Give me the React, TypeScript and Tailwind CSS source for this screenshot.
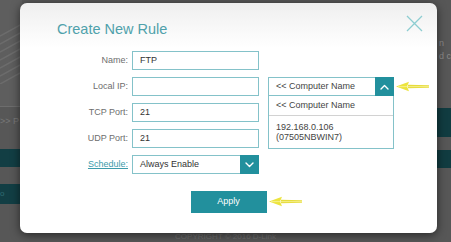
import React from 'react';

const teal = 'bg-[#22909d]';

function Chevron({ up }: { up?: boolean }) {
  return (
    <svg width="9" height="6" viewBox="0 0 9 6" fill="none">
      <path
        d={up ? 'M1 5 L4.5 1.5 L8 5' : 'M1 1 L4.5 4.5 L8 1'}
        stroke="white"
        strokeWidth="1.4"
        strokeLinecap="round"
        strokeLinejoin="round"
      />
    </svg>
  );
}

function YellowArrow() {
  return (
    <svg width="35" height="11" viewBox="0 0 35 11">
      <path d="M13 3.8 L34 4.3 L34 6.7 L13 7.2 Z" fill="#e6dc3c" />
      <path d="M1 5.5 L14 0.8 L12 5.5 L14 10.2 Z" fill="#ece43e" />
      <path d="M3 5.6 L34 5.6" stroke="#f7f39a" strokeWidth="0.8" />
    </svg>
  );
}

function Field({ label, value, link }: { label: string; value?: string; link?: boolean }) {
  return (
    <div className="flex items-center h-[19px]">
      <div
        className={`w-[108px] text-right text-[9px] ${link ? 'text-[#3d9cab] underline' : 'text-[#6e6e6e]'}`}
      >
        {label}
      </div>
      <div className="ml-[4px] w-[127px] h-[19px] border border-[#84c2c9] bg-white flex items-center pl-[7px] text-[9px] text-[#333]">
        {value}
      </div>
    </div>
  );
}

export default function App() {
  return (
    <div className="relative w-[451px] h-[242px] overflow-hidden bg-[#575757] font-['Liberation_Sans',Arial,sans-serif]">
      {/* page behind the overlay */}
      <div className="flex flex-col h-full">
        <div className="flex justify-between h-[234px]">
          <div className="w-[22px] flex flex-col">
            <div className="h-[106px] bg-[#5e5e5e] pt-[24px]">
              <svg width="22" height="60" viewBox="0 0 22 60">
                {[0, 8, 16, 24, 32, 40, 48].map((y) => (
                  <path key={y} d={`M0 ${y + 12} L22 ${y}`} stroke="#6c6c6c" strokeWidth="1.5" />
                ))}
              </svg>
            </div>
            <div className="h-[1px] bg-[#6d6d6d]" />
            <div className="h-[42px] pt-[9px] text-[9px] text-[#777] leading-[10px] whitespace-nowrap">{'>> P'}</div>
            <div className="h-[18px] bg-[#123e44]" />
            <div className="h-[17px]" />
            <div className="h-[20px] bg-[#123e44] text-[8px] text-[#2f6b72] leading-[20px]">o</div>
          </div>
          <div className="w-[14px] flex flex-col pt-[37px]">
            <div className="text-[9px] leading-[13px] text-[#8a8a8a] whitespace-nowrap pl-[2px]">n</div>
            <div className="text-[9px] leading-[13px] text-[#8a8a8a] whitespace-nowrap pl-[2px]">d c</div>
            <div className="h-[45px]" />
            <div className="h-[29px] bg-[#113c41]" />
            <div className="h-[13px]" />
            <div className="h-[18px] bg-[#113c41]" />
          </div>
        </div>
        <div className="text-center text-[8px] text-[#6f6f6f] leading-[10px] pt-[2px]">COPYRIGHT © 2016 D-Link</div>
      </div>

      {/* modal */}
      <div className="absolute left-[20px] top-[3px] w-[417px] h-[230px] rounded-[7px] bg-[linear-gradient(#efefef,#ffffff_45px)] shadow-[0_2px_10px_rgba(0,0,0,0.55)]">
        <div className="pl-[37px] pt-[17px] text-[14.5px] leading-[18px] text-[#4fa1ab]">Create New Rule</div>

        <svg className="absolute right-[14px] top-[12px]" width="17" height="17" viewBox="0 0 17 17">
          <path d="M1 1 L16 16 M16 1 L1 16" stroke="#8dcdd1" strokeWidth="1.3" />
        </svg>

        <div className="mt-[13px] flex">
          <div className="flex flex-col gap-[7px]">
            <Field label="Name:" value="FTP" />
            <Field label="Local IP:" />
            <Field label="TCP Port:" value="21" />
            <Field label="UDP Port:" value="21" />
            <div className="flex items-center h-[19px]">
              <div className="w-[108px] text-right text-[9px] text-[#3d9cab] underline">Schedule:</div>
              <div className="ml-[4px] w-[127px] h-[19px] border border-[#84c2c9] bg-white flex items-center text-[9px] text-[#333]">
                <span className="pl-[7px] flex-1">Always Enable</span>
                <span className={`w-[19px] h-[19px] -mr-px ${teal} flex items-center justify-center`}>
                  <Chevron />
                </span>
              </div>
            </div>
          </div>

          <div className="relative ml-[9px] mt-[26px] w-[126px]">
            <div className="h-[19px] border border-[#84c2c9] bg-white flex items-center text-[9px] text-[#444]">
              <span className="pl-[7px] flex-1">{'<< Computer Name'}</span>
              <span className={`w-[19px] h-[19px] -mr-px ${teal} flex items-center justify-center`}>
                <Chevron up />
              </span>
            </div>
            <div className="border-x border-b border-[#84c2c9] bg-white text-[9px] text-[#444]">
              <div className="h-[20px] flex items-center pl-[7px] border-b border-[#d2d2d2]">{'<< Computer Name'}</div>
              <div className="py-[6px] pl-[7px] leading-[10px]">
                <div>192.168.0.106</div>
                <div>(07505NBWIN7)</div>
              </div>
            </div>
            <div className="absolute left-[127px] top-[4px]">
              <YellowArrow />
            </div>
          </div>
        </div>

        <div className="mt-[17px] flex justify-center">
          <div className="relative">
            <div className={`w-[76px] h-[22px] ${teal} text-white text-[9px] flex items-center justify-center`}>Apply</div>
            <div className="absolute left-[77px] top-[5px]">
              <YellowArrow />
            </div>
          </div>
        </div>
      </div>
    </div>
  );
}
